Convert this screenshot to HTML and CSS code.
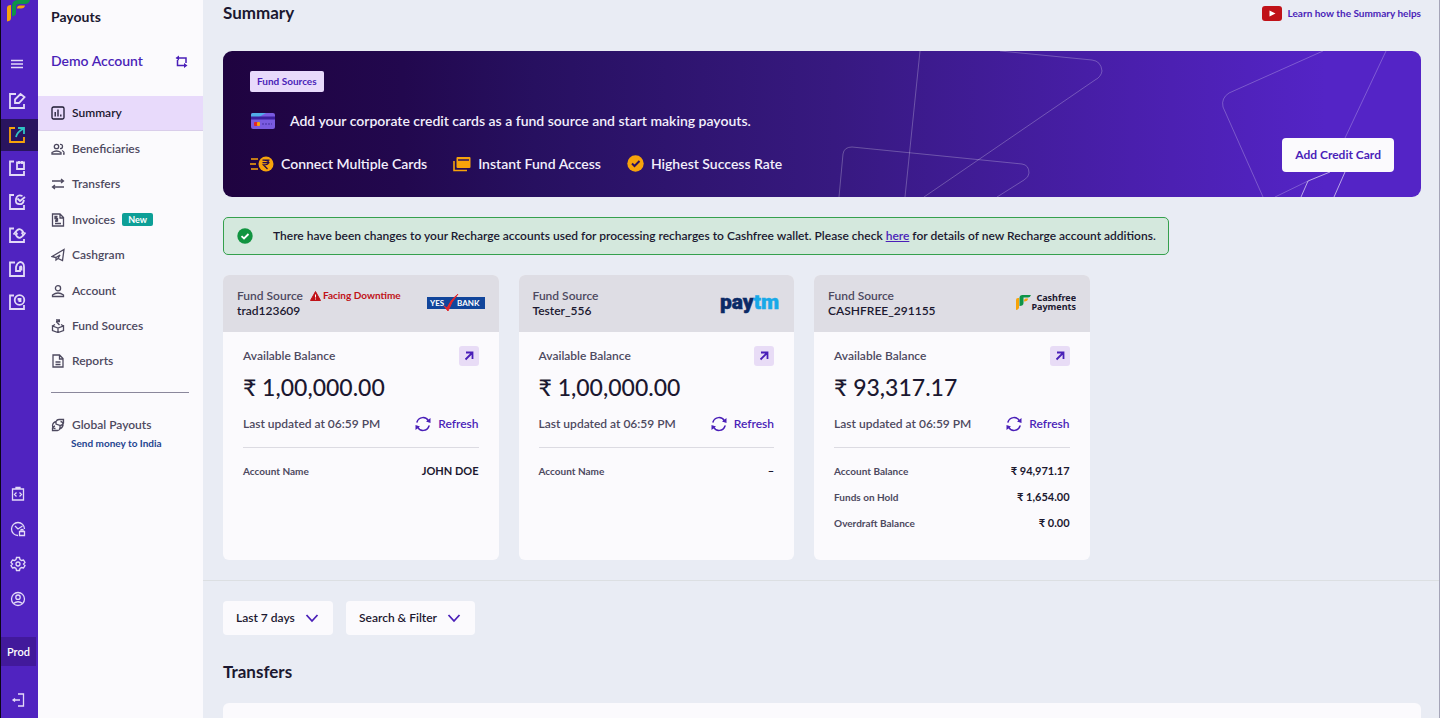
FILE: index.html
```html
<!DOCTYPE html>
<html lang="en">
<head>
  <meta charset="UTF-8" />
  <meta name="viewport" content="width=device-width, initial-scale=1.0"/>
  <title>Payouts - Summary</title>
  <link rel="stylesheet" href="styles.css">
</head>
<body>
  <!-- Shared icons -->
  <svg width="0" height="0" class="sprite" aria-hidden="true">
    <symbol id="arrow" viewBox="0 0 20 20"><path d="M6.500 13.500 13 7M7 6.500h6.500V13" fill="none" stroke="#4a1fb8" stroke-width="1.800"/></symbol>
    <symbol id="refresh" viewBox="0 0 16 16"><g fill="none" stroke="#4a1fb8" stroke-width="1.500" stroke-linecap="round" stroke-linejoin="round"><path d="M2 6a6.300 6.300 0 0 1 11.500-1.200M14 10a6.300 6.300 0 0 1-11.500 1.200"/></g><path d="M15.500 2v5l-4.500-1.500zM.5 14V9L5 10.500z" fill="#4a1fb8"/></symbol>
    <symbol id="chevron" viewBox="0 0 14 14"><path d="m1.500 4 5.500 6 5.500-6" fill="none" stroke="#4a1fb8" stroke-width="1.800"/></symbol>
  </svg>

  <div class="app">
    <aside class="rail">
      <a href="#" class="logo" aria-label="Cashfree">
        <svg width="24" height="22" viewBox="0 0 24 22"><path d="M1 21.500V8q0-3 4-3v13q0 3-4 3.500" fill="#f7a30b"/><path d="M6 16.500V6q0-6 6-6h12q-1 4-5 4h-6q-3 0-3 3v6q0 3-4 3.500" fill="#0f9447"/><path d="M11 8.500q0-3 3-3h5q-.5 3-4 3z" fill="#f7a30b"/></svg>
      </a>
      <button class="rail-btn" aria-label="Menu"><svg viewBox="0 0 18 18" class="thin"><path d="M3 5.500h12M3 9h12M3 12.500h12"/></svg></button>
      <nav class="products">
        <a href="#" class="rail-btn" aria-label="Payments"><svg viewBox="0 0 18 18"><path d="M8 2H2v14h14v-4M7 7.500 12.500 2l4 3L11 11H7z"/></svg></a>
        <a href="#" class="rail-btn active" aria-label="Payouts"><svg viewBox="0 0 18 18"><path d="M7 2H2v14h14v-5" class="orange"/><path d="M8 11q1-5 7-8M10 2h6v6" class="teal"/></svg></a>
        <a href="#" class="rail-btn" aria-label="Auto collect"><svg viewBox="0 0 18 18"><path d="M6 2.500H2V16h14v-4M9 3.500h7V10H9zM11 2v3m3-3v3m-1 2.500v.1"/></svg></a>
        <a href="#" class="rail-btn" aria-label="Verification"><svg viewBox="0 0 18 18"><path d="M6 2H2v14h14v-4M14.500 3q-5.500-2-6.500 3t3 5q4 1 5-4M9.500 5.500l2.500 2.500 5-4"/></svg></a>
        <a href="#" class="rail-btn" aria-label="Subscriptions"><svg viewBox="0 0 18 18"><path d="M6 2.500H2V16h14v-3M8 5.500q3-4 6-1 1 1 1.500 2.500M15 9.500q-3 4-6 1-1-1-1.500-2.500M5.500 8.500l2-2.500 2 2.500M13.500 6.500l2 2.500 2-2.500"/></svg></a>
        <a href="#" class="rail-btn" aria-label="Softpos"><svg viewBox="0 0 18 18"><path d="M7 2.500H2V16h14V7q0-5-4-5-3 1-4 5v4h4V7q1.500-1.500 1.500.500v3"/></svg></a>
        <a href="#" class="rail-btn" aria-label="Offers"><svg viewBox="0 0 18 18"><path d="M6 2.500H2V16h14v-4"/><circle cx="11.500" cy="7" r="4.800"/><path d="M10.500 7.500V6h2v2h-2"/></svg></a>
      </nav>
      <nav class="tools">
        <a href="#" class="rail-btn small" aria-label="Developers"><svg viewBox="0 0 16 16"><path d="M2.500 3h11v11h-11zM6 3V1.500h4V3M6.500 6.500l-2 2 2 2m3-4 2 2-2 2"/></svg></a>
        <a href="#" class="rail-btn small" aria-label="Security"><svg viewBox="0 0 16 16"><path d="M14.500 8A6.500 6.500 0 1 0 8 14.500M5 5l3 3 4.500-3M9.500 10.500h5v4h-5zm1-1q1.500-2 3 0"/></svg></a>
        <a href="#" class="rail-btn small" aria-label="Settings"><svg viewBox="0 0 16 16"><path d="m6.500 1.500-.5 2-1.500 1-2-.5L1 6.500 2.500 8 1 9.500 2.500 12l2-.5 1.500 1 .5 2h3l.5-2 1.500-1 2 .5L15 9.500 13.500 8 15 6.500 13.500 4l-2 .5-1.500-1-.5-2z"/><circle cx="8" cy="8" r="2"/></svg></a>
        <a href="#" class="rail-btn small" aria-label="Profile"><svg viewBox="0 0 16 16"><circle cx="8" cy="8" r="6.500"/><circle cx="8" cy="6.200" r="2.200"/><path d="M3.500 12.500q4.500-3.500 9 0"/></svg></a>
      </nav>
      <button class="env">Prod</button>
      <a href="#" class="rail-btn small logout" aria-label="Log out"><svg viewBox="0 0 16 16"><path d="M8 2h5.500v12H8M10 8H3m2-1.500L3 8l2 1.500"/></svg></a>
    </aside>

    <aside class="sidebar">
      <h2>Payouts</h2>
      <button class="account">Demo Account
        <svg width="13" height="13" viewBox="0 0 13 13"><path d="M3 3h8v5M10 10.500H2.500V5" fill="none" stroke="#4a1fb8" stroke-width="1.500"/><path d="M4 .5v5L.5 3zM9 8v5l3.500-2.500z" fill="#4a1fb8"/></svg>
      </button>
      <nav class="menu">
        <a href="#" class="active"><svg viewBox="0 0 14 14"><rect x="1" y="1" width="12" height="12" rx="1.500"/><path d="M4.200 10.500V6M7 10.500v-7m2.800 7V8.500" /></svg>Summary</a>
        <a href="#"><svg viewBox="0 0 14 14"><circle cx="5.500" cy="4.500" r="2.200"/><path d="M1 12v-1.500q4.500-3 9 0V12zM9 2.400q2.500-.2 2.500 2T9 6.700M11 8.500q2 .8 2 2V12h-1"/></svg>Beneficiaries</a>
        <a href="#"><svg viewBox="0 0 14 14"><path d="M1 4h11M10 2l2.500 2L10 6M13 10H2m2-2-2.500 2L4 12"/></svg>Transfers</a>
        <a href="#"><svg viewBox="0 0 14 14"><path d="M1.500 1H9l3.500 3.500V13h-11zM9 1v4h3.500M4 10.500h6M6.500 3.500H4v2h2.500V8H4m1.200-5v6"/></svg>Invoices <span class="new">New</span></a>
        <a href="#"><svg viewBox="0 0 14 14"><path d="M1 8.500 13 1.500l-1.500 11-4.500-2-2 1.500V9.500zM5 9.500l4-2.500-2 3.500"/></svg>Cashgram</a>
        <a href="#"><svg viewBox="0 0 14 14"><circle cx="7" cy="4.200" r="2.600"/><path d="M1.500 12.500v-1.500q5.500-4 11 0v1.500z"/></svg>Account</a>
        <a href="#"><svg viewBox="0 0 14 14"><path d="m1.500 7 5.500 2 5.500-2v4.500L7 13.500l-5.500-2zM7 9v4.500M1.500 7 4 5.500M12.500 7 10 5.500M5 .8h4M5 2.500h4M5.500.8q3 0 3 1t-2.500 1.500L8.500 6"/></svg>Fund Sources</a>
        <a href="#"><svg viewBox="0 0 14 14"><path d="M2 1h6.500L12 4.500V13H2zM8.500 1v4H12M4.500 8h5m-5 2.500h5"/></svg>Reports</a>
      </nav>
      <div class="global">
        <a href="#"><svg viewBox="0 0 14 14"><path d="M4.500 10.500Q1.500 10.500 1.500 7.500 2 4 5.500 3.500M9.500 3.500q3 .5 2.500 4-1 3-4 3.500M5 6V3.500q1-2 3-2h4.500V5q-.5 2-3 2.500zM9 8v3q-1 1.500-2.500 1.500H1.500V10Q2 8.500 4 8"/></svg>Global Payouts</a>
        <a href="#" class="send">Send money to India</a>
      </div>
    </aside>

    <main>
      <header>
        <h1>Summary</h1>
        <a href="#" class="learn">
          <svg width="20" height="15" viewBox="0 0 20 15"><rect width="20" height="15" rx="3" fill="#c01218"/><path d="m7.500 4.500 6 3-6 3z" fill="#fff"/></svg>
          Learn how the Summary helps
        </a>
      </header>

      <section class="banner">
        <svg class="banner-lines" viewBox="0 0 1198 146" preserveAspectRatio="xMaxYMid slice" aria-hidden="true">
          <g fill="none" stroke="#fff" stroke-opacity=".25">
            <path d="M697 0 682 146M777 0l92 9q9 1 10 11-1 6-7 9L701 146"/>
            <path d="m616 146 4-43q1-7 9-7l170 17q7 1 7 9 0 4-5 7l-27 17"/>
            <path d="m1100 0-94 42q-8 5-6 14l40 90M1163 0l-41 87M1052 146l33-16"/>
            <path d="m1078 146 7-16 22-9M1111 146l11-25" stroke-opacity=".6"/>
          </g>
        </svg>
        <div class="banner-text">
          <span class="chip">Fund Sources</span>
          <p class="lead">
            <svg width="24" height="16" viewBox="0 0 24 16"><rect width="24" height="16" rx="2" fill="#7a5be0"/><path d="M2 0h13L8 4H0V2q0-2 2-2" fill="#50aee8"/><path d="M0 3.500h24v3H0z" fill="#3d1f9e"/><rect x="3" y="9" width="4" height="4" rx="1" fill="#e3262b"/><rect x="6" y="9" width="3" height="4" rx="1" fill="#f7a30b"/><path d="M11 11h10" stroke="#44309f" stroke-dasharray="2 1"/></svg>
            Add your corporate credit cards as a fund source and start making payouts.
          </p>
          <ul>
            <li><svg width="24" height="16" viewBox="0 0 24 16"><path d="M1 3h7M0 8h6M1 13h7" stroke="#f7a30b" stroke-width="1.500"/><circle cx="16" cy="8" r="7.500" fill="#f7a30b"/><path d="M12.500 4.200h7m-7 2.400h7M14 4.200q4.500 0 4.500 2.400T13.500 9l4 4" fill="none" stroke="#24094f" stroke-width="1.300"/></svg>Connect Multiple Cards</li>
            <li><svg width="18" height="16" viewBox="0 0 18 16"><path d="M1 5v9.500h13" fill="none" stroke="#f7a30b" stroke-width="1.600"/><rect x="3.500" y="1" width="14" height="11" rx="1" fill="#f7a30b"/><path d="M5 4h11" stroke="#2a1060" stroke-width="1.600"/></svg>Instant Fund Access</li>
            <li><svg width="17" height="17" viewBox="0 0 17 17"><circle cx="8.500" cy="8.500" r="8.200" fill="#f7a30b"/><path d="m5 8.500 2.500 2.500L12.500 6" fill="none" stroke="#2a1060" stroke-width="2"/></svg>Highest Success Rate</li>
          </ul>
        </div>
        <button class="add">Add Credit Card</button>
      </section>

      <div class="alert">
        <svg width="16" height="16" viewBox="0 0 16 16"><circle cx="8" cy="8" r="7.700" fill="#119440"/><path d="m4.500 8.200 2.500 2.300 4.500-4.500" fill="none" stroke="#fff" stroke-width="1.800"/></svg>
        <p>There have been changes to your Recharge accounts used for processing recharges to Cashfree wallet. Please check <a href="#">here</a> for details of new Recharge account additions.</p>
      </div>

      <section class="cards">
        <article class="card">
          <div class="card-head">
            <div>
              <p>Fund Source <span class="down"><svg width="11" height="10" viewBox="0 0 11 10"><path d="M5.500.5 10.500 9.500H.5z" fill="#c01218" stroke="#c01218" stroke-linejoin="round"/><path d="M5.500 3.500V6.500m0 1v1" stroke="#fff"/></svg>Facing Downtime</span></p>
              <strong>trad123609</strong>
            </div>
            <svg width="58" height="20" viewBox="0 0 58 20" class="yes"><path d="M0 4h58v12H0z" fill="#11459b"/><text x="3" y="13">YES</text><text x="30" y="13">BANK</text><path d="m17 13 3 2Q24 6 31 1q-7 8-10 17z" fill="#e3262b" stroke="#e3262b"/></svg>
          </div>
          <div class="card-body">
            <div class="row"><span>Available Balance</span><a href="#" class="open" aria-label="Open"><svg width="20" height="20"><use href="#arrow"/></svg></a></div>
            <div class="amount">₹ 1,00,000.00</div>
            <div class="row updated"><span>Last updated at 06:59 PM</span><button class="refresh"><svg width="16" height="16"><use href="#refresh"/></svg>Refresh</button></div>
            <dl>
              <div><dt>Account Name</dt><dd>JOHN DOE</dd></div>
            </dl>
          </div>
        </article>

        <article class="card">
          <div class="card-head">
            <div>
              <p>Fund Source</p>
              <strong>Tester_556</strong>
            </div>
            <svg width="60" height="24" viewBox="0 0 60 24" class="paytm"><text x="59" y="18">pay<tspan>tm</tspan></text></svg>
          </div>
          <div class="card-body">
            <div class="row"><span>Available Balance</span><a href="#" class="open" aria-label="Open"><svg width="20" height="20"><use href="#arrow"/></svg></a></div>
            <div class="amount">₹ 1,00,000.00</div>
            <div class="row updated"><span>Last updated at 06:59 PM</span><button class="refresh"><svg width="16" height="16"><use href="#refresh"/></svg>Refresh</button></div>
            <dl>
              <div><dt>Account Name</dt><dd>–</dd></div>
            </dl>
          </div>
        </article>

        <article class="card">
          <div class="card-head">
            <div>
              <p>Fund Source</p>
              <strong>CASHFREE_291155</strong>
            </div>
            <svg width="60" height="20" viewBox="0 0 60 20" class="cashfree"><path d="M0 17V7q0-2 2-2h1v10q-1 2-3 2" fill="#f7a30b"/><path d="M3.500 13V5q0-3 3-3H15q-1 2.500-3 2.500H7.500V10q0 3-4 3" fill="#0f9447"/><path d="M8 8.500q0-3 2-3h2q0 3-4 3" fill="#f7a30b"/><text x="60" y="8">Cashfree</text><text x="60" y="17">Payments</text></svg>
          </div>
          <div class="card-body">
            <div class="row"><span>Available Balance</span><a href="#" class="open" aria-label="Open"><svg width="20" height="20"><use href="#arrow"/></svg></a></div>
            <div class="amount">₹ 93,317.17</div>
            <div class="row updated"><span>Last updated at 06:59 PM</span><button class="refresh"><svg width="16" height="16"><use href="#refresh"/></svg>Refresh</button></div>
            <dl>
              <div><dt>Account Balance</dt><dd>₹ 94,971.17</dd></div>
              <div><dt>Funds on Hold</dt><dd>₹ 1,654.00</dd></div>
              <div><dt>Overdraft Balance</dt><dd>₹ 0.00</dd></div>
            </dl>
          </div>
        </article>
      </section>

      <section class="filters">
        <label class="filter">
          <select aria-label="Period">
            <option>Last 7 days</option>
            <option>Today</option>
          </select>
          <svg width="14" height="14"><use href="#chevron"/></svg>
        </label>
        <button class="filter">Search &amp; Filter <svg width="14" height="14"><use href="#chevron"/></svg></button>
      </section>

      <h2 class="transfers-title">Transfers</h2>
      <section class="panel"></section>
    </main>
  </div>
</body>
</html>
```
FILE: styles.css
```css
:root {
  --purple: #5023c0;
  --link: #4a1fb8;
  --text: #1b1830;
  --muted: #4d495f;
  --bg: #e9ecf4;
  --white: #fbfafd;
}

* {
  box-sizing: border-box;
}

body {
  margin: 0;
  font-family: Lato, "Open Sans", sans-serif;
  font-size: 12px;
  font-weight: 600;
  line-height: 16px;
  color: var(--text);
  background: var(--bg);
}

h1, h2, p, ul, dl, dd {
  margin: 0;
  padding: 0;
}

a {
  color: inherit;
  text-decoration: none;
}

button, select {
  font: inherit;
  color: inherit;
  background: none;
  border: none;
  padding: 0;
  cursor: pointer;
}

svg {
  flex-shrink: 0;
  display: block;
}

.sprite {
  position: absolute;
}

.app {
  display: flex;
  min-height: 100vh;
  border-right: 1px solid #a5a5b8;
}

/* Product rail */
.rail {
  width: 38px;
  flex-shrink: 0;
  display: flex;
  flex-direction: column;
  background: var(--purple);
  border-left: 1px solid #0c0618;
}

.logo {
  padding-left: 5px;
  margin-bottom: 26px;
}

.rail-btn {
  display: flex;
  align-items: center;
  padding-left: 7px;
  height: 32px;
}

.rail-btn svg {
  width: 18px;
  height: 18px;
  fill: none;
  stroke: #e3daf7;
  stroke-width: 1.8;
}

.rail-btn .thin {
  stroke-width: 1.3;
}

.rail-btn.active {
  background: #29145f;
}

.rail-btn .orange {
  stroke: #f7a30b;
}

.rail-btn .teal {
  stroke: #2fc4c4;
}

.products {
  display: flex;
  flex-direction: column;
  justify-content: space-between;
  height: 233px;
  margin-top: 5px;
}

.tools {
  display: flex;
  flex-direction: column;
  gap: 3px;
  margin-top: auto;
}

.rail-btn.small {
  padding-left: 9px;
}

.rail-btn.small svg {
  width: 16px;
  height: 16px;
  stroke-width: 1.3;
}

.env {
  height: 29px;
  margin: 22px 2px 18px 0;
  background: #42199b;
  color: #fff;
  font-size: 11px;
}

.logout {
  margin-bottom: 2px;
}

/* Sidebar */
.sidebar {
  width: 165px;
  flex-shrink: 0;
  background: var(--white);
}

.sidebar h2 {
  font-size: 14px;
  font-weight: 700;
  padding: 9px 13px 0;
}

.account {
  display: flex;
  align-items: center;
  justify-content: space-between;
  width: 100%;
  padding: 0 15px 0 13px;
  margin: 28px 0 27px;
  font-size: 14px;
  color: var(--link);
}

.menu {
  display: grid;
  grid-auto-rows: 1fr;
  height: 283px;
}

.menu a, .global a {
  display: flex;
  align-items: center;
  gap: 7px;
  padding-left: 13px;
  color: var(--muted);
}

.menu svg, .global svg {
  width: 14px;
  height: 14px;
  fill: none;
  stroke: currentColor;
  stroke-width: 1.3;
}

.menu .active {
  background: #e8dafb;
  border-bottom: 1px solid #d9cdea;
  color: var(--text);
}

.new {
  background: #0d9f97;
  color: #fff;
  font-size: 9px;
  font-weight: 700;
  line-height: 13px;
  padding: 0 6px;
  border-radius: 2px;
}

.global {
  margin: 13px 14px 0 0;
  padding-top: 24px;
}

.global::before {
  content: "";
  display: block;
  border-top: 1px solid #8a879b;
  margin: -24px 0 24px 13px;
}

.global .send {
  padding: 2px 0 0 33px;
  font-size: 10px;
  font-weight: 700;
  color: #1f4490;
}

/* Main */
main {
  flex: 1;
  min-width: 0;
  display: flex;
  flex-direction: column;
  padding: 0 18px 0 20px;
}

header {
  display: flex;
  justify-content: space-between;
  align-items: center;
  padding: 3px 0 28px;
}

h1, .transfers-title {
  font-size: 17px;
  font-weight: 700;
  line-height: 20px;
}

.learn {
  display: flex;
  align-items: center;
  gap: 6px;
  font-size: 10px;
  font-weight: 700;
  color: var(--link);
}

.banner {
  position: relative;
  display: flex;
  justify-content: space-between;
  align-items: flex-end;
  padding: 20px 27px 25px;
  border-radius: 9px;
  overflow: hidden;
  background: linear-gradient(90deg, #1f0340, #22084e 15%, #271060 26%, #371980 51%, #4a1fad 76%, #5424c6 92%);
  color: #f3effc;
  font-size: 14px;
}

.banner-lines {
  position: absolute;
  inset: 0;
  width: 100%;
  height: 100%;
}

.banner-text {
  position: relative;
}

.chip {
  display: inline-block;
  background: #e8dafb;
  color: var(--link);
  font-size: 10px;
  font-weight: 700;
  line-height: 21px;
  padding: 0 7px;
  border-radius: 2px;
}

.lead {
  display: flex;
  align-items: center;
  gap: 15px;
  margin: 21px 0 26px 1px;
}

.banner ul {
  display: flex;
  gap: 26px;
  list-style: none;
}

.banner li {
  display: flex;
  align-items: center;
  gap: 7px;
}

.add {
  position: relative;
  background: var(--white);
  color: var(--link);
  font-size: 12px;
  font-weight: 700;
  line-height: 34px;
  padding: 0 13px;
  border-radius: 4px;
}

.alert {
  display: flex;
  align-items: center;
  gap: 20px;
  width: 79%;
  margin: 20px 0;
  padding: 10px 6px 10px 13px;
  background: #d4e8dd;
  border: 1px solid #35a04d;
  border-radius: 5px;
}

.alert a {
  color: var(--link);
  text-decoration: underline;
}

.cards {
  display: flex;
  gap: 20px;
}

.card {
  flex: 0 0 23%;
  min-height: 285px;
  background: var(--white);
  border-radius: 6px;
  overflow: hidden;
}

.card-head {
  display: flex;
  justify-content: space-between;
  align-items: center;
  background: #dedde4;
  height: 57px;
  padding: 0 14px 1px;
  line-height: 15px;
}

.card-head p {
  display: flex;
  align-items: center;
  gap: 7px;
  color: var(--muted);
}

.card-head strong {
  font-weight: 600;
}

.down {
  display: flex;
  align-items: center;
  gap: 2px;
  color: #c01218;
  font-size: 10px;
  font-weight: 700;
}

.yes text {
  fill: #fff;
  font: 700 8px Lato, sans-serif;
}

.paytm text {
  fill: #0b2a66;
  stroke: #0b2a66;
  stroke-width: 0.5;
  font: 900 21px Roboto, sans-serif;
  text-anchor: end;
}

.paytm tspan {
  fill: #17a9e8;
  stroke: #17a9e8;
}

.cashfree text {
  fill: #1b1830;
  font: 700 9px "Noto Sans", sans-serif;
  text-anchor: end;
}

.card-body {
  padding: 14px 20px;
  color: var(--muted);
}

.row {
  display: flex;
  justify-content: space-between;
  align-items: center;
}

.open {
  background: #e8dcf6;
  border-radius: 3px;
}

.amount {
  font-size: 23px;
  font-weight: 500;
  line-height: 28px;
  color: var(--text);
  margin: 7px 0 15px;
}

.updated {
  padding-bottom: 15px;
  border-bottom: 1px solid #dcdbe2;
}

.refresh {
  display: flex;
  align-items: center;
  gap: 7px;
  color: var(--link);
}

dl {
  display: grid;
  gap: 10px;
  margin-top: 15px;
}

dl div {
  display: flex;
  justify-content: space-between;
}

dt {
  font-size: 10px;
  font-weight: 700;
}

dd {
  font-size: 11px;
  font-weight: 700;
  color: var(--text);
}

.filters {
  display: flex;
  gap: 13px;
  margin: 20px -18px 0 -20px;
  padding: 20px 20px 0;
  border-top: 1px solid #dcdfe2;
}

.filter {
  display: flex;
  align-items: center;
  gap: 10px;
  height: 34px;
  padding: 0 14px 0 13px;
  background: var(--white);
  border-radius: 4px;
}

.filter select {
  appearance: none;
}

.transfers-title {
  margin: 27px 0 21px;
}

.panel {
  flex: 1;
  background: var(--white);
  border-radius: 6px 6px 0 0;
}
```
